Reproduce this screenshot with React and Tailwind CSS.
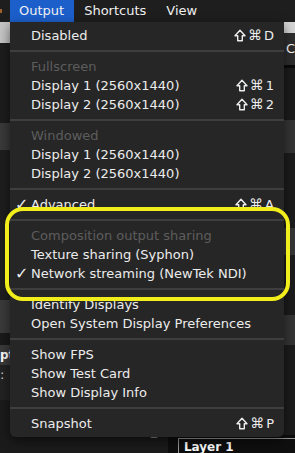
import React from 'react';

const menuItems = [
    { label: 'Disabled', shortcut: 'D' },
    { sep: true },
    { label: 'Fullscreen', header: true },
    { label: 'Display 1 (2560x1440)', shortcut: '1' },
    { label: 'Display 2 (2560x1440)', shortcut: '2' },
    { sep: true },
    { label: 'Windowed', header: true },
    { label: 'Display 1 (2560x1440)' },
    { label: 'Display 2 (2560x1440)' },
    { sep: true },
    { label: 'Advanced', shortcut: 'A', checked: true },
    { sep: true },
    { label: 'Composition output sharing', header: true },
    { label: 'Texture sharing (Syphon)' },
    { label: 'Network streaming (NewTek NDI)', checked: true },
    { sep: true },
    { label: 'Identify Displays' },
    { label: 'Open System Display Preferences' },
    { sep: true },
    { label: 'Show FPS' },
    { label: 'Show Test Card' },
    { label: 'Show Display Info' },
    { sep: true },
    { label: 'Snapshot', shortcut: 'P' },
];

// outlined shift arrow
const ShiftIcon = () => (
    <svg width="12" height="13" viewBox="0 0 12 13" fill="none">
        <path d="M6 1.2 L11 6.8 H8.3 V11.8 H3.7 V6.8 H1 Z" stroke="#ececec" strokeWidth="1.4" strokeLinejoin="round" />
    </svg>
);

// shift + cmd + key, like the mac menu shows it
const Shortcut = ({ keyName }) => (
    <span className="flex items-center gap-[2px] whitespace-nowrap">
        <ShiftIcon />
        <span className="text-[14px] leading-[19px]">⌘</span>
        <span>{keyName}</span>
    </span>
);

const MenuRow = ({ item }) => {
    if (item.sep) {
        return (
            <div className="h-[12px] flex items-center">
                <div className="w-full h-[2px] bg-[#3e3e3e]" />
            </div>
        );
    }
    return (
        <div className={`relative h-[19px] leading-[19px] flex items-center pl-[21px] pr-[10px] ${item.header ? 'text-[#5d5d5d]' : 'text-[#ececec]'}`}>
            {item.checked && <span className="absolute left-[5px] top-0 text-[16px] leading-[19px]">✓</span>}
            <span className="flex-1 whitespace-nowrap">{item.label}</span>
            {item.shortcut && <Shortcut keyName={item.shortcut} />}
        </div>
    );
};

const App = () => {
    return (
        <div className="relative w-[295px] h-[453px] overflow-hidden bg-[#161616] text-[13px] font-['DejaVu_Sans',sans-serif]">
            {/* menu bar */}
            <div className="h-[22px] flex items-stretch bg-[#1e1e1e] text-[#f0f0f0]">
                <div className="w-[10px] relative">
                    <div className="absolute left-0 top-[9px] w-[2px] h-[4px] bg-[#a0602a]" />
                </div>
                <div className="bg-[#1c5fcb] pl-[9px] pr-[10px] flex items-center">Output</div>
                <div className="px-[10px] flex items-center">Shortcuts</div>
                <div className="px-[10px] flex items-center">View</div>
            </div>

            {/* app underneath */}
            <div className="flex">
                <div className="w-[170px] flex flex-col">
                    <div className="h-[21px] bg-[#c5c5c5]" />
                    <div className="h-[80px] bg-[#1d1d1d]" />
                    <div className="h-[27px] bg-[#3a3a3a]" />
                    <div className="h-[150px] bg-[#1e1e1e]" />
                    <div className="h-[33px] bg-[#3b3b3b]" />
                    <div className="h-[12px] bg-[#1a1a1a]" />
                    <div className="h-[20px] bg-[#3a3a3a] text-white text-[12px] font-bold leading-[20px]">pt</div>
                    <div className="h-[35px] bg-[#232323] text-[#cfcfcf] leading-[20px]">:</div>
                    <div className="h-[60px] bg-[#1b1b1b] relative">
                        <div className="absolute left-[150px] top-[34px] w-[8px] h-[4px] bg-[#8a8a8a] rounded-b-[2px]" />
                    </div>
                </div>
                <div className="flex-1 flex flex-col">
                    <div className="h-[11px] bg-[#d5d5d5]" />
                    <div className="h-[32px] bg-[#2e2e2e] text-white leading-[32px] pl-[118px]">C</div>
                    <div className="h-[3px] bg-[#0a0a0a]" />
                    <div className="h-[52px] bg-[#1c1c1c]" />
                    <div className="h-[33px] bg-[#353535]" />
                    <div className="h-[75px] bg-[#1c1c1c]" />
                    <div className="h-[27px] bg-[#353535]" />
                    <div className="h-[60px] bg-[#1c1c1c]" />
                    <div className="h-[30px] bg-[#353535]" />
                    <div className="h-[90px] bg-[#1c1c1c]" />
                    <div className="h-[22px] flex bg-[#0e0e0e]">
                        <div className="w-[10px]" />
                        <div className="flex-1 mt-[3px] border-t border-l border-[#9a9a9a] bg-[#0f0f0f] text-white text-[12px] font-semibold pl-[5px] leading-[16px]">Layer 1</div>
                    </div>
                </div>
            </div>

            {/* dropdown menu */}
            <div className="absolute left-[10px] top-[22px] w-[274px] bg-[#262626] rounded-b-[6px] pt-[4px] pb-[4px] shadow-[0_4px_12px_rgba(0,0,0,0.55)]">
                {menuItems.map((item, i) => (
                    <MenuRow key={i} item={item} />
                ))}
            </div>

            {/* yellow annotation */}
            <div className="absolute left-[5px] top-[207px] w-[285px] h-[94px] border-[4px] border-[#f2ee1c] rounded-[18px]" />
        </div>
    );
};

export default App;
